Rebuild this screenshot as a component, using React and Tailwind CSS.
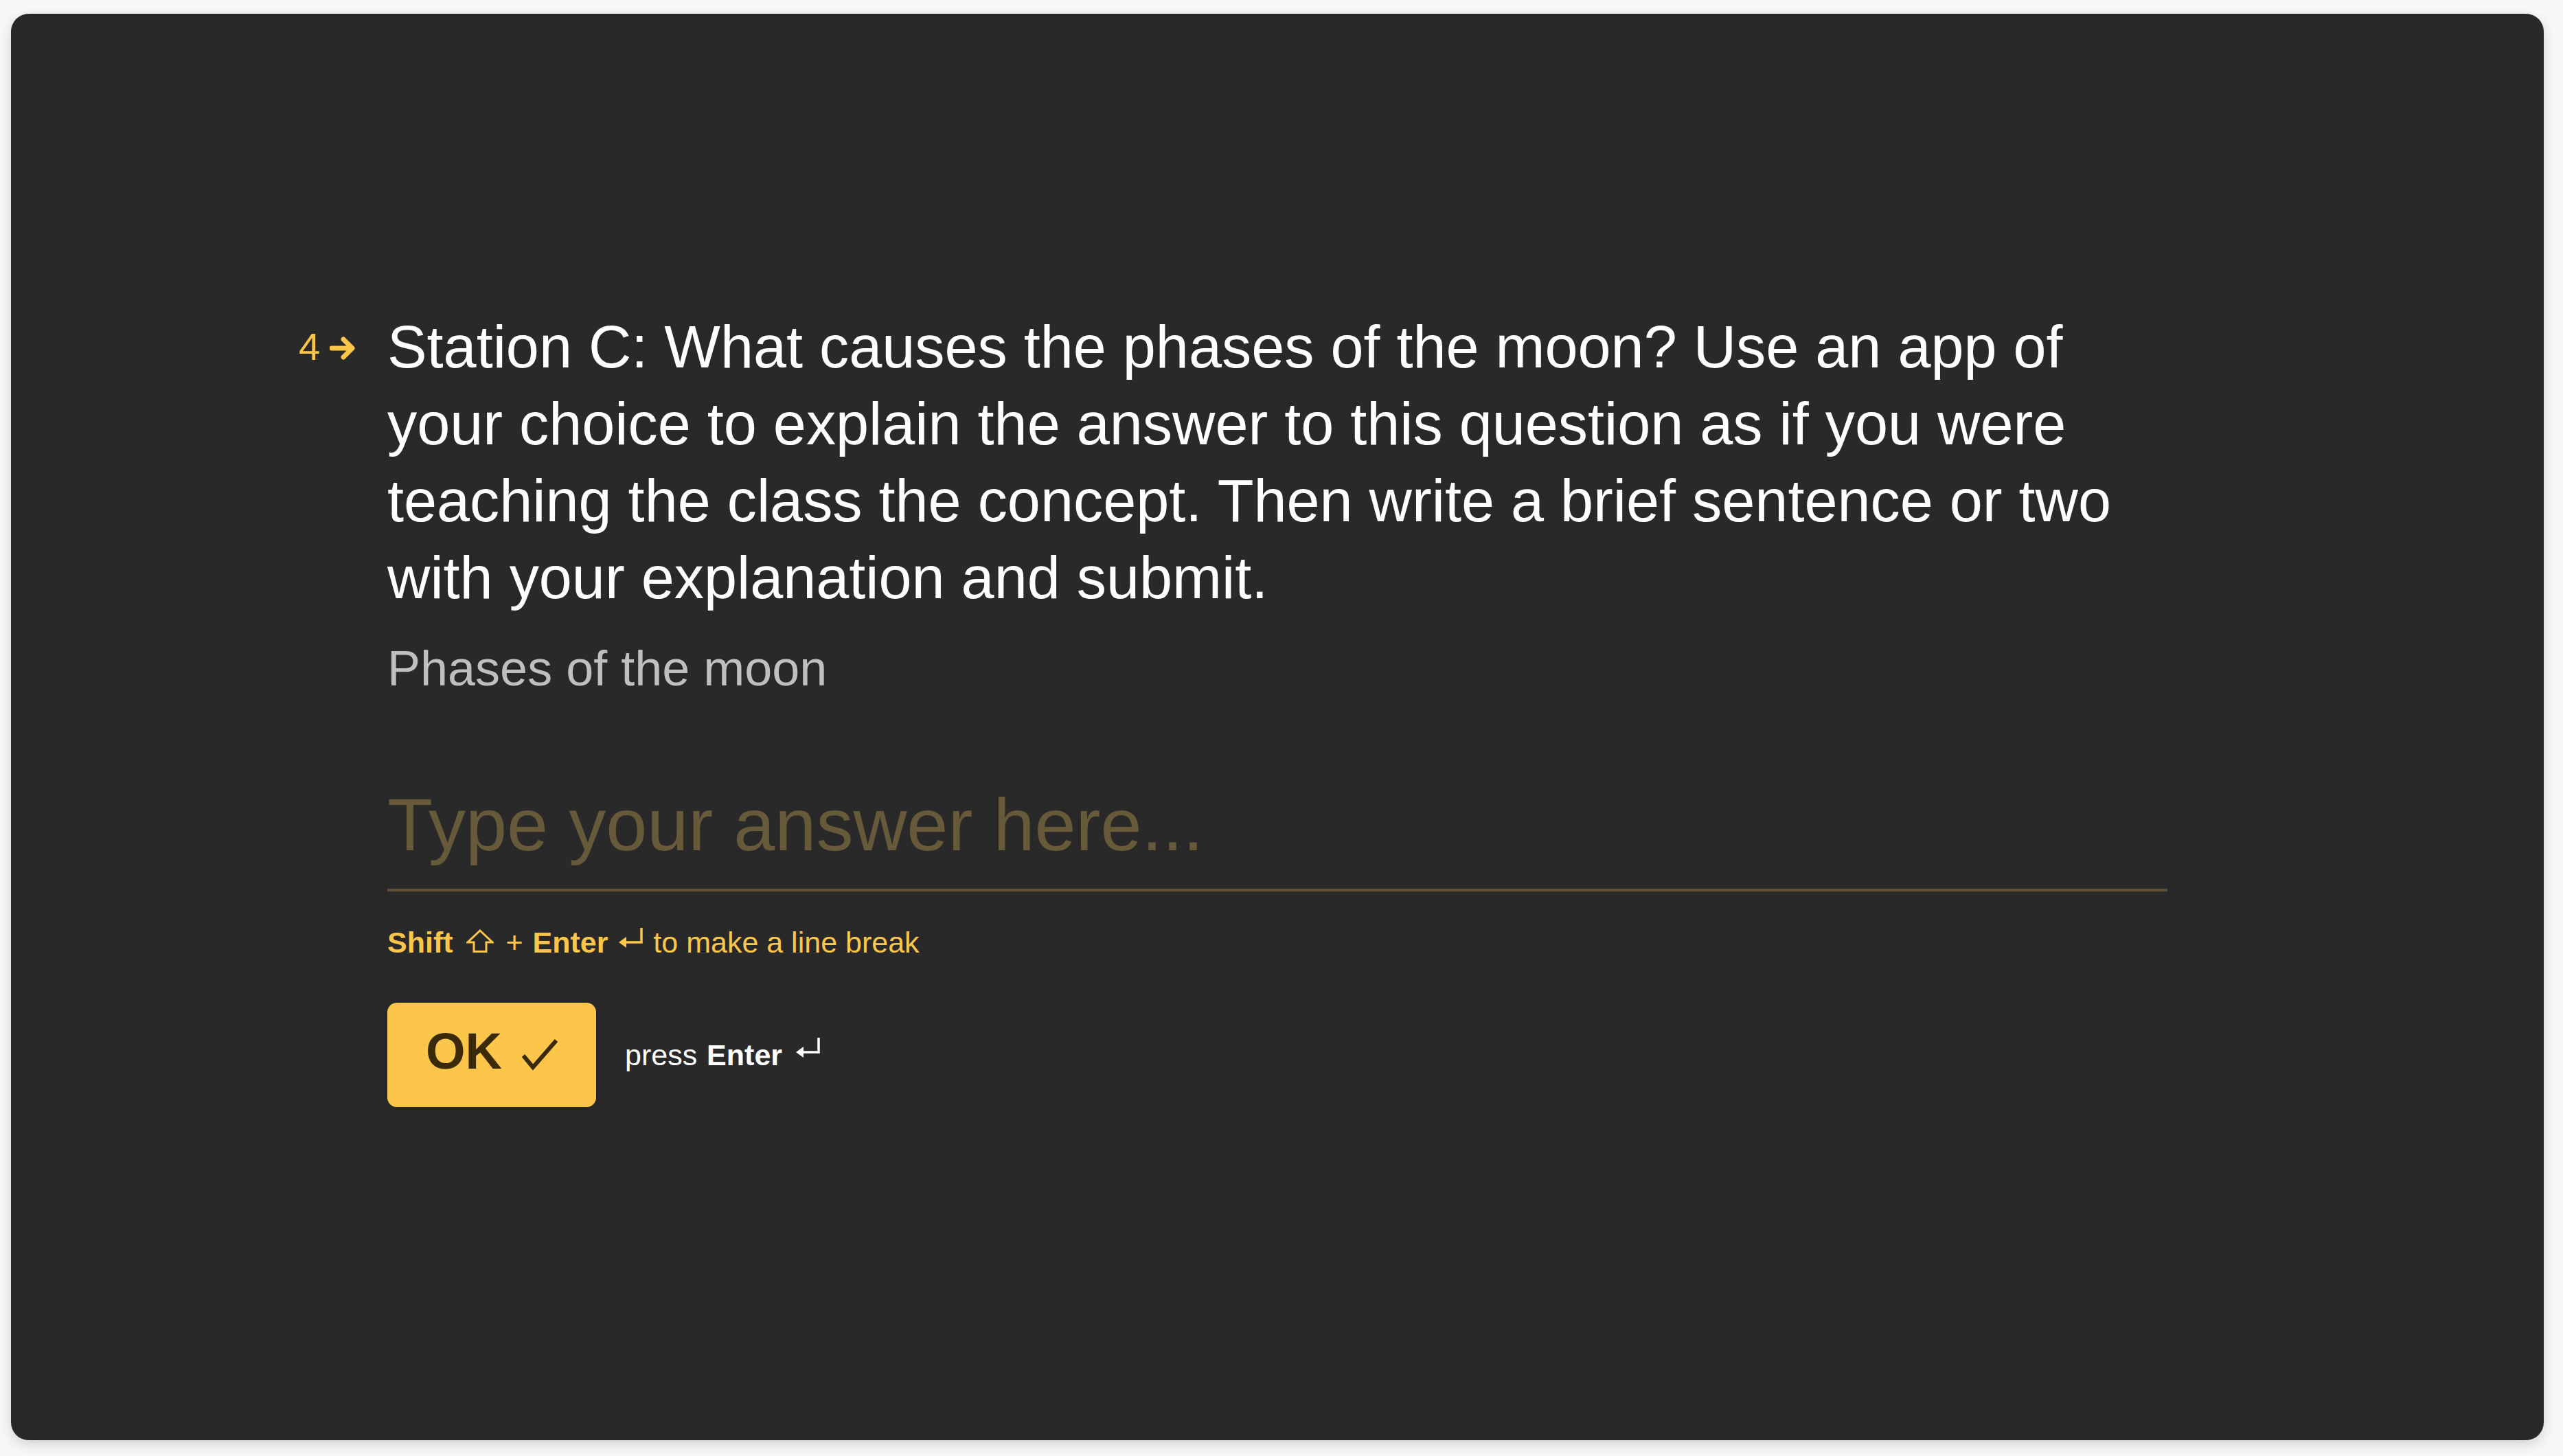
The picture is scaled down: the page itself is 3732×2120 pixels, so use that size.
import React from "react";

function ShiftIcon() {
  return (
    <svg width="40" height="34" viewBox="0 0 40 34" className="inline-block align-baseline" fill="none">
      <path d="M20 2 L38 19 H29 V32.5 H11 V19 H2 Z" stroke="#fcc64a" strokeWidth="3" strokeLinejoin="miter" />
    </svg>
  );
}

function EnterIcon({ color }) {
  return (
    <svg width="36" height="36" viewBox="0 0 36 36" className="inline-block align-baseline" fill="none">
      <path d="M33 0 V21 H8" stroke={color} strokeWidth="3.5" />
      <path d="M0 21 L11 13 L11 29 Z" fill={color} />
    </svg>
  );
}

function ArrowIcon() {
  return (
    <svg width="38" height="36" viewBox="0 0 38 36" fill="none">
      <path d="M3 18 H31" stroke="#fcc64a" strokeWidth="7" strokeLinecap="round" />
      <path d="M20 5 L33 18 L20 31" stroke="#fcc64a" strokeWidth="7" strokeLinecap="round" strokeLinejoin="round" />
    </svg>
  );
}

function CheckIcon() {
  return (
    <svg width="52" height="46" viewBox="0 0 52 46" fill="none" className="mt-[8px]">
      <path d="M2 25 L16 42 L50 3" stroke="#3b2a08" strokeWidth="6" strokeLinejoin="miter" />
    </svg>
  );
}

export default function App() {
  return (
    <div className="w-[3732px] h-[2120px] bg-[#f7f7f7] pt-[20px] pl-[16px] overflow-hidden font-['Liberation_Sans',Arial,sans-serif]">
      <div className="w-[3688px] h-[2077px] rounded-[26px] bg-[#292929] shadow-[0_6px_18px_rgba(0,0,0,0.14)] pt-[429px] pl-[419px]">
        <div className="flex">
          <div className="w-[129px] h-[112px] flex items-center shrink-0">
            <span className="text-[56px] leading-[112px] text-[#fcc64a]">4</span>
            <span className="ml-[14px] flex items-center mt-[4px]">
              <ArrowIcon />
            </span>
          </div>
          <div className="w-[2592px] flex flex-col">
            <h1 className="text-[86.4px] leading-[112px] text-white font-normal">
              Station C: What causes the phases of the moon? Use an app of your choice to explain the answer to this question as if you were teaching the class the concept. Then write a brief sentence or two with your explanation and submit.
            </h1>
            <p className="mt-[27px] text-[72px] leading-[98px] text-[#bfbfbf]">Phases of the moon</p>

            <div className="mt-[108px] pb-[22px] border-b-[4px] border-[#5e5236]">
              <textarea
                rows={1}
                placeholder="Type your answer here..."
                className="block w-full h-[142px] p-0 m-0 text-[108px] leading-[142px] bg-transparent text-[#fcc64a] placeholder:text-[#665a3b] resize-none outline-none overflow-hidden font-['Liberation_Sans',Arial,sans-serif]"
              />
            </div>

            <div className="mt-[46px] text-[43px] leading-[56px] text-[#fcc64a] whitespace-nowrap">
              <span className="font-bold">Shift</span>{" "}
              <span className="ml-[7px] mr-[6px]"><ShiftIcon /></span>{" "}
              +{" "}
              <span className="ml-[2px] font-bold">Enter</span>{" "}
              <span className="ml-[4px] mr-[2px]"><EnterIcon color="#fcc64a" /></span>{" "}
              to make a line break
            </div>

            <div className="mt-[60px] flex items-center">
              <button className="w-[304px] h-[152px] rounded-[14px] bg-[#fcc64a] shadow-[0_4px_14px_rgba(0,0,0,0.12)] flex items-center justify-center gap-[29px] pb-[10px]">
                <span className="text-[74px] leading-[74px] font-bold text-[#3b2a08]">OK</span>
                <CheckIcon />
              </button>
              <div className="ml-[42px] text-[43px] leading-[56px] text-white whitespace-nowrap">
                press <span className="ml-[2px] font-bold">Enter</span>{" "}
                <span className="ml-[8px] relative top-[-4px]"><EnterIcon color="#ffffff" /></span>
              </div>
            </div>
          </div>
        </div>
      </div>
    </div>
  );
}
